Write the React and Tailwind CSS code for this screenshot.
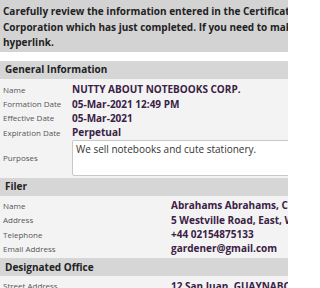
import React from "react";

const Row = ({ label, value, valueX }) => (
  <div className="flex items-center h-[14.33px]">
    <div className="shrink-0 text-[8px] text-[#555] pl-[3px]" style={{ width: valueX }}>
      {label}
    </div>
    <div className="whitespace-nowrap text-[10px] font-bold text-[#3a2145]">{value}</div>
  </div>
);

const Header = ({ children }) => (
  <div className="h-[18px] flex items-center px-[5px] bg-[#d6d6d6] text-[10px] font-bold text-[#222]">
    {children}
  </div>
);

export default function App() {
  return (
    <div
      className="w-[288px] h-[288px] overflow-hidden bg-white"
      style={{ fontFamily: '"Open Sans", sans-serif' }}
    >
      <div className="w-[480px]">
        <div className="bg-[#d3d3d3] px-[3px] pt-[4px] pb-[1px] text-[10px] leading-[15.5px] font-bold text-[#222] whitespace-nowrap">
          Carefully review the information entered in the Certificate of Formation
          <br />
          Corporation which has just completed. If you need to make changes, click the
          <br />
          hyperlink.
        </div>

        <div className="mt-[9px]">
          <Header>General Information</Header>
          <div className="bg-[#f3f3f3] pt-[4px] pb-[2px]">
            <Row label="Name" value="NUTTY ABOUT NOTEBOOKS CORP." valueX={72} />
            <Row label="Formation Date" value="05-Mar-2021 12:49 PM" valueX={72} />
            <Row label="Effective Date" value="05-Mar-2021" valueX={72} />
            <Row label="Expiration Date" value="Perpetual" valueX={72} />
            <div className="flex items-center">
              <div className="w-[72px] shrink-0 text-[8px] text-[#555] pl-[3px]">Purposes</div>
              <div className="w-[300px] h-[36px] bg-white border border-[#c8c8c8] rounded-[2px] px-[3px] pt-[1px] text-[10px] leading-[14px] text-[#333]">
                We sell notebooks and cute stationery.
              </div>
            </div>
          </div>
        </div>

        <Header>Filer</Header>
        <div className="bg-[#f3f3f3] pt-[3px] pb-[2px]">
          <Row label="Name" value="Abrahams Abrahams, Cooper & Co." valueX={171} />
          <Row label="Address" value="5 Westville Road, East, Westville" valueX={171} />
          <Row label="Telephone" value="+44 02154875133" valueX={171} />
          <Row label="Email Address" value="gardener@gmail.com" valueX={171} />
        </div>

        <Header>Designated Office</Header>
        <div className="bg-[#f3f3f3] pt-[3px]">
          <Row label="Street Address" value="12 San Juan, GUAYNABO, PR" valueX={171} />
        </div>
      </div>
    </div>
  );
}
